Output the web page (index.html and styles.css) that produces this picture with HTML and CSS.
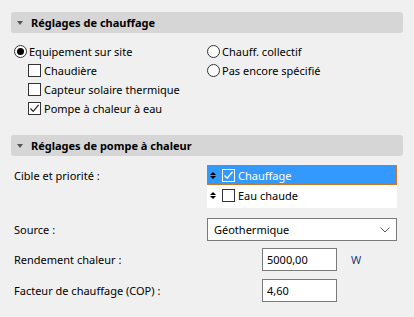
FILE: index.html
```html
<!DOCTYPE html>
<html lang="fr">
<head>
    <meta charset="UTF-8">
    <meta name="viewport" content="width=device-width, initial-scale=1.0">
    <title>Réglages de chauffage</title>
    <link rel="stylesheet" href="styles.css">
</head>
<body>

    <div class="panel">
        <div class="section-head"><span class="caret"></span>Réglages de chauffage</div>
        <div class="options">
            <div class="col">
                <div class="opt"><span class="radio on"></span>Equipement sur site</div>
                <div class="opt sub"><span class="check"></span>Chaudière</div>
                <div class="opt sub"><span class="check"></span>Capteur solaire thermique</div>
                <div class="opt sub"><span class="check on">
                    <svg width="11" height="11" viewBox="0 0 11 11"><path d="M1.5 5.5 L4.2 8.3 L9.6 1.8" fill="none" stroke="#222" stroke-width="1.2"/></svg>
                </span>Pompe à chaleur à eau</div>
            </div>
            <div class="col">
                <div class="opt"><span class="radio"></span>Chauff. collectif</div>
                <div class="opt"><span class="radio"></span>Pas encore spécifié</div>
            </div>
        </div>

        <div class="section-head second"><span class="caret"></span>Réglages de pompe à chaleur</div>
        <div class="fields">
            <div class="field list-field">
                <span class="label">Cible et priorité :</span>
                <div class="listbox">
                    <div class="list-row selected">
                        <span class="updown"></span>
                        <span class="check light">
                            <svg width="11" height="11" viewBox="0 0 11 11"><path d="M1.5 5.5 L4.2 8.3 L9.6 1.8" fill="none" stroke="#fff" stroke-width="1.4"/></svg>
                        </span>
                        Chauffage
                    </div>
                    <div class="list-row">
                        <span class="updown"></span>
                        <span class="check"></span>
                        Eau chaude
                    </div>
                </div>
            </div>
            <div class="field select-field">
                <span class="label">Source :</span>
                <div class="select">
                    Géothermique
                    <svg class="chevron" width="10" height="6" viewBox="0 0 10 6"><path d="M0.5 0.5 L5 5 L9.5 0.5" fill="none" stroke="#555" stroke-width="1"/></svg>
                </div>
            </div>
            <div class="field num-field">
                <span class="label">Rendement chaleur :</span>
                <div class="num-wrap"><div class="num">5000,00</div><span class="unit">W</span></div>
            </div>
            <div class="field num-field last">
                <span class="label">Facteur de chauffage (COP) :</span>
                <div class="num-wrap"><div class="num">4,60</div></div>
            </div>
        </div>
    </div>

</body>
</html>
```

FILE: styles.css
```css
body {
    margin: 0;
    background-color: #f0f0f0;
    font-family: "Noto Sans", "Open Sans", sans-serif;
    font-size: 11px;
    color: #000;
}
.panel {
    padding: 12px 11px 0 11px;
}
.section-head {
    display: flex;
    align-items: center;
    height: 21px;
    background-color: #d6d6d6;
    border-radius: 3px;
    font-weight: bold;
    font-size: 11px;
}
.section-head.second {
    margin-top: 17px;
}
.caret {
    width: 0;
    height: 0;
    margin: 1px 8px 0 6px;
    border-left: 3.5px solid transparent;
    border-right: 3.5px solid transparent;
    border-top: 4px solid #555;
}
.options {
    display: grid;
    grid-template-columns: 193px 1fr;
    margin-top: 9px;
    padding-left: 3px;
}
.opt {
    display: flex;
    align-items: center;
    height: 19px;
    white-space: nowrap;
}
.opt.sub {
    padding-left: 14px;
}
.radio {
    box-sizing: border-box;
    width: 13px;
    height: 13px;
    margin-right: 2px;
    border: 1px solid #333;
    border-radius: 50%;
    background-color: #fff;
    display: flex;
    align-items: center;
    justify-content: center;
}
.radio.on::after {
    content: "";
    width: 7px;
    height: 7px;
    border-radius: 50%;
    background-color: #000;
}
.check {
    box-sizing: border-box;
    width: 13px;
    height: 13px;
    margin-right: 3px;
    border: 1px solid #333;
    background-color: #fff;
    display: flex;
    align-items: center;
    justify-content: center;
}
.check.light {
    border-color: #fff;
    background-color: transparent;
}
.fields {
    display: flex;
    flex-direction: column;
    margin-top: 9px;
    padding-left: 3px;
}
.field {
    display: grid;
    grid-template-columns: 193px 190px;
    align-items: center;
}
.list-field {
    align-items: start;
}
.list-field .label {
    padding-top: 3px;
}
.listbox {
    height: 43px;
    background-color: #fff;
}
.list-row {
    display: flex;
    align-items: center;
    height: 20px;
    padding-left: 3px;
    white-space: nowrap;
}
.list-row.selected {
    box-sizing: border-box;
    background-color: #3399ff;
    color: #fff;
    border: 1px dotted #c87a2a;
}
.list-row.selected .updown {
    margin-left: -1px;
}
.updown {
    display: flex;
    flex-direction: column;
    gap: 1px;
    width: 7px;
    margin-right: 5px;
}
.updown::before,
.updown::after {
    content: "";
    width: 0;
    height: 0;
    border-left: 3px solid transparent;
    border-right: 3px solid transparent;
}
.updown::before {
    border-bottom: 3px solid currentColor;
}
.updown::after {
    border-top: 3px solid currentColor;
}
.list-row.selected .updown::before {
    border-bottom-color: #000;
}
.list-row.selected .updown::after {
    border-top-color: #000;
}
.select-field {
    margin-top: 10px;
}
.select {
    box-sizing: border-box;
    display: flex;
    align-items: center;
    justify-content: space-between;
    height: 23px;
    padding: 0 6px 0 6px;
    border: 1px solid #7a7a7a;
    background-color: #fff;
}
.num-field {
    margin-top: 7px;
}
.num-field.last {
    margin-top: 8px;
}
.num-wrap {
    display: flex;
    align-items: center;
    padding-left: 55px;
}
.num {
    box-sizing: border-box;
    width: 75px;
    height: 23px;
    padding: 0 4px;
    display: flex;
    align-items: center;
    border: 1px solid #7a7a7a;
    background-color: #fff;
}
.unit {
    margin-left: 14px;
    color: #1f3d73;
}
```
